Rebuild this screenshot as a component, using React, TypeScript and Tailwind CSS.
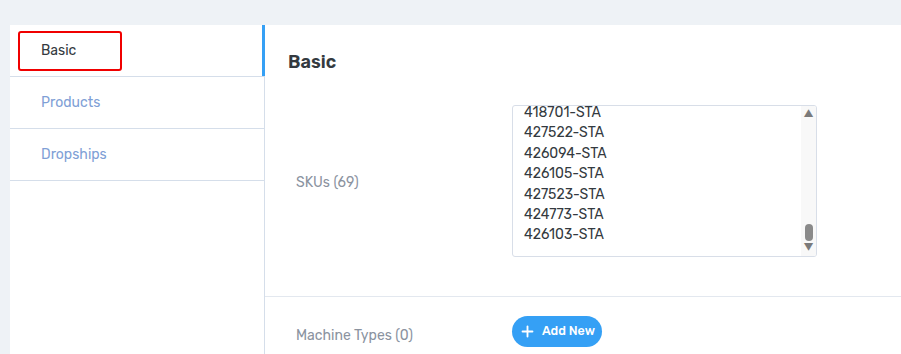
import { Plus } from 'lucide-react';

const tabs = ['Basic', 'Products', 'Dropships'];

const skus = [
  '418701-STA',
  '427522-STA',
  '426094-STA',
  '426105-STA',
  '427523-STA',
  '424773-STA',
  '426103-STA',
];

export default function App() {
  return (
    <div
      className="h-[354px] w-[901px] overflow-hidden bg-[#eef2f6] pl-[10px] pt-[25px]"
      style={{ fontFamily: 'Rubik, Inter, "Noto Sans", sans-serif' }}
    >
      <div className="flex h-full bg-white">
        {/* Sidebar */}
        <div className="w-[255px] shrink-0 border-r border-[#d5deea]">
          {tabs.map((tab, i) => (
            <div
              key={tab}
              className={`relative flex h-[52px] items-center border-b border-[#d5deea] pl-[31px] text-[14px] ${
                i === 0 ? 'text-[#343a40]' : 'text-[#7f9fd6]'
              }`}
            >
              {i === 0 && (
                <>
                  <div className="absolute left-[8px] top-[6px] h-[40px] w-[104px] rounded-[3px] border-2 border-[#f00000]" />
                  <div className="absolute -right-px top-0 h-[51px] w-[3px] bg-[#35a0f5]" />
                </>
              )}
              <span className="relative -mt-[1px]">{tab}</span>
            </div>
          ))}
        </div>

        {/* Main */}
        <div className="flex-1">
          <h2 className="pl-[23px] pt-[25px] text-[18px] font-semibold leading-[24px] text-[#343a40]">
            Basic
          </h2>

          <div className="flex items-center border-b border-[#e3e8ef] pb-[39px] pl-[31px] pt-[31px]">
            <div className="w-[216px] pt-[3px] text-[14px] text-[#8b939f]">SKUs (69)</div>
            <div className="flex h-[152px] w-[305px] overflow-hidden rounded-[3px] border border-[#d8dee8]">
              <div className="flex-1 overflow-hidden pl-[11px]">
                <ul className="-mt-[3px] text-[14px] leading-[20.4px] text-[#343a40]">
                  {skus.map((s) => (
                    <li key={s}>{s}</li>
                  ))}
                </ul>
              </div>
              <div className="flex w-[15px] flex-col items-center bg-[#f8f8f8] py-[3px]">
                <span className="text-[10px] leading-[10px] text-[#7a7a7a]">▲</span>
                <div className="flex-1" />
                <div className="mb-[2px] h-[17px] w-[8px] rounded-full bg-[#8a8a8a]" />
                <span className="text-[10px] leading-[10px] text-[#7a7a7a]">▼</span>
              </div>
            </div>
          </div>

          <div className="flex items-center pl-[31px] pt-[19px]">
            <div className="w-[216px] pt-[7px] text-[14px] text-[#8b939f]">Machine Types (0)</div>
            <button className="flex h-[31px] items-center gap-[6px] rounded-full bg-[#35a0f5] pl-[7px] pr-[7px] text-[12.5px] font-medium text-white">
              <Plus className="h-[17px] w-[17px]" strokeWidth={2.6} />
              Add New
            </button>
          </div>
        </div>
      </div>
    </div>
  );
}
